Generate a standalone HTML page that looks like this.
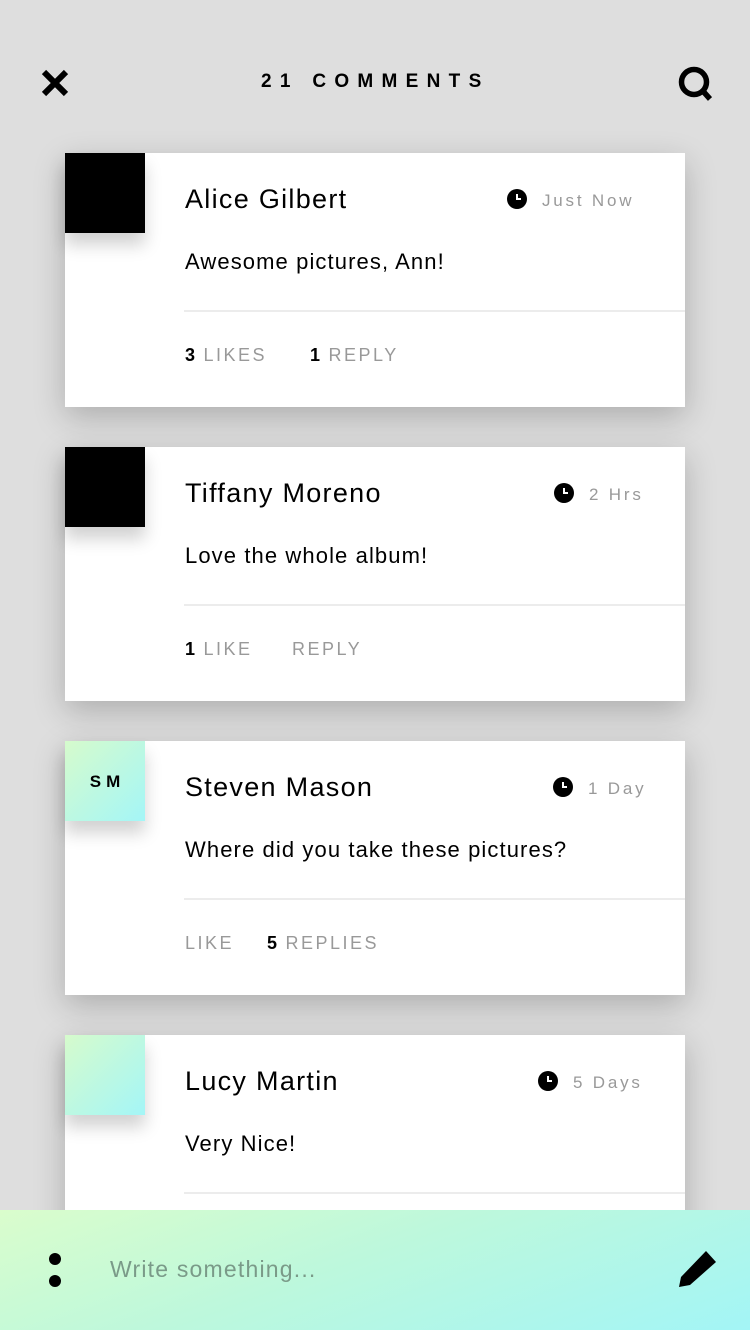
<!DOCTYPE html>
<html><head><style>
*{margin:0;padding:0;box-sizing:border-box}
body{width:750px;height:1330px;background:#dedede;font-family:"Liberation Sans",sans-serif;position:relative;overflow:hidden}
.title{position:absolute;top:71px;left:261px;font-weight:bold;font-size:19px;letter-spacing:8.3px;color:#000;white-space:nowrap}
.card{position:absolute;left:65px;width:620px;height:254px;background:#fff;box-shadow:0 10px 30px rgba(0,0,0,.22)}
.av{position:absolute;left:0;top:0;width:80px;height:80px;background:#000;box-shadow:0 12px 16px rgba(0,0,0,.18)}
.av.g{background:linear-gradient(135deg,#d6fbcc,#a4f6f7)}
.av span{position:absolute;left:0;width:80px;top:31px;text-align:center;font-weight:bold;font-size:17px;letter-spacing:5px;padding-left:5px}
.name{position:absolute;left:120px;top:31px;font-size:27px;letter-spacing:1.3px;color:#000;white-space:nowrap}
.txt{position:absolute;left:120px;top:96px;font-size:22px;letter-spacing:1.1px;color:#000;white-space:nowrap}
.hr{position:absolute;left:119px;right:0;top:157px;height:2px;background:#ececec}
.a{position:absolute;top:192px;font-size:18px;letter-spacing:2.5px;color:#999;white-space:nowrap}
.a b{color:#000;margin-right:6px}
.time{position:absolute;top:36px;font-size:17px;letter-spacing:2.8px;color:#999;white-space:nowrap}
.time svg{vertical-align:-3px;margin-right:15px}
.bar{position:absolute;left:0;top:1210px;width:750px;height:120px;background:linear-gradient(160deg,#dafdcc 0%,#bdf8dc 45%,#a3f5f6 100%)}
</style></head><body>
<svg style="position:absolute;left:41px;top:69px" width="28" height="28" viewBox="0 0 28 28"><path d="M3 3L25 25M25 3L3 25" stroke="#000" stroke-width="6"/></svg>
<div class="title">21 COMMENTS</div>
<svg style="position:absolute;left:678px;top:66px" width="36" height="36" viewBox="0 0 36 36"><circle cx="16" cy="16" r="12.5" fill="none" stroke="#000" stroke-width="5.5"/><path d="M24 24L32 33" stroke="#000" stroke-width="5.5"/></svg>

<div class="card" style="top:153px"><div class="av"></div><div class="name">Alice Gilbert</div>
<div class="time" style="left:442px"><svg width="20" height="20" viewBox="0 0 20 20"><circle cx="10" cy="10" r="10"/><path d="M10 5v5h4" stroke="#fff" stroke-width="2" fill="none"/></svg>Just Now</div>
<div class="txt">Awesome pictures, Ann!</div><div class="hr"></div>
<div class="a" style="left:120px"><b>3</b>LIKES</div><div class="a" style="left:245px"><b>1</b>REPLY</div></div>

<div class="card" style="top:447px"><div class="av"></div><div class="name">Tiffany Moreno</div>
<div class="time" style="left:489px"><svg width="20" height="20" viewBox="0 0 20 20"><circle cx="10" cy="10" r="10"/><path d="M10 5v5h4" stroke="#fff" stroke-width="2" fill="none"/></svg>2 Hrs</div>
<div class="txt">Love the whole album!</div><div class="hr"></div>
<div class="a" style="left:120px"><b>1</b>LIKE</div><div class="a" style="left:227px">REPLY</div></div>

<div class="card" style="top:741px"><div class="av g"><span>SM</span></div><div class="name">Steven Mason</div>
<div class="time" style="left:488px"><svg width="20" height="20" viewBox="0 0 20 20"><circle cx="10" cy="10" r="10"/><path d="M10 5v5h4" stroke="#fff" stroke-width="2" fill="none"/></svg>1 Day</div>
<div class="txt">Where did you take these pictures?</div><div class="hr"></div>
<div class="a" style="left:120px">LIKE</div><div class="a" style="left:202px"><b>5</b>REPLIES</div></div>

<div class="card" style="top:1035px"><div class="av g"></div><div class="name">Lucy Martin</div>
<div class="time" style="left:473px"><svg width="20" height="20" viewBox="0 0 20 20"><circle cx="10" cy="10" r="10"/><path d="M10 5v5h4" stroke="#fff" stroke-width="2" fill="none"/></svg>5 Days</div>
<div class="txt">Very Nice!</div><div class="hr"></div></div>

<div class="bar">
<svg style="position:absolute;left:46px;top:40px" width="18" height="40"><circle cx="9" cy="9" r="6"/><circle cx="9" cy="31" r="6"/></svg>
<div style="position:absolute;left:110px;top:46px;font-size:23px;letter-spacing:1.2px;color:#7a9a88">Write something...</div>
<svg style="position:absolute;left:678px;top:40px" width="40" height="40" viewBox="0 0 40 40"><path d="M1 37L3 27L28 1L38 12L12 35Z"/></svg>
</div>
</body></html>
